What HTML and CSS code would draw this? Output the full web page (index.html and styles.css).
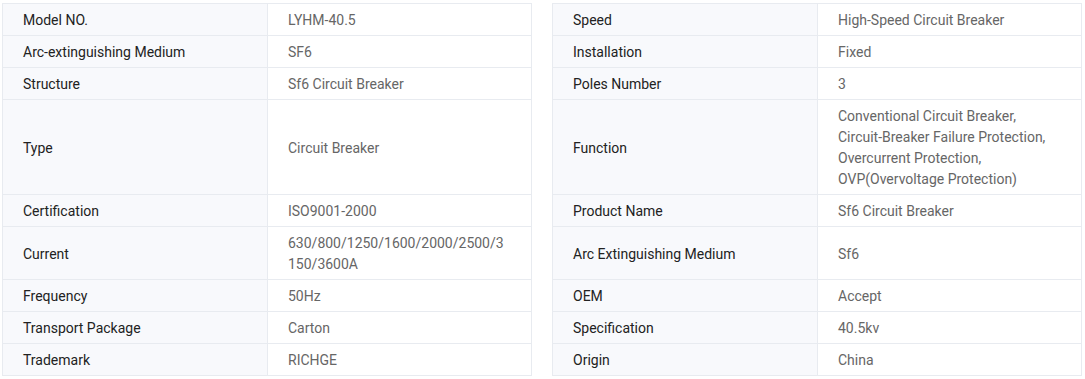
FILE: index.html
```html
<!DOCTYPE html>
<html lang="en">
<head>
<meta charset="utf-8">
<title>Specifications</title>
<link rel="stylesheet" href="styles.css">
</head>
<body>
<div class="spec">
  <div class="cell label first top">Model NO.</div>
  <div class="cell value top">LYHM-40.5</div>
  <div class="gap"></div>
  <div class="cell label first top">Speed</div>
  <div class="cell value top">High-Speed Circuit Breaker</div>

  <div class="cell label first">Arc-extinguishing Medium</div>
  <div class="cell value">SF6</div>
  <div class="gap"></div>
  <div class="cell label first">Installation</div>
  <div class="cell value">Fixed</div>

  <div class="cell label first">Structure</div>
  <div class="cell value">Sf6 Circuit Breaker</div>
  <div class="gap"></div>
  <div class="cell label first">Poles Number</div>
  <div class="cell value">3</div>

  <div class="cell label first">Type</div>
  <div class="cell value">Circuit Breaker</div>
  <div class="gap"></div>
  <div class="cell label first">Function</div>
  <div class="cell value">Conventional Circuit Breaker, Circuit-Breaker Failure Protection, Overcurrent Protection, OVP(Overvoltage Protection)</div>

  <div class="cell label first">Certification</div>
  <div class="cell value">ISO9001-2000</div>
  <div class="gap"></div>
  <div class="cell label first">Product Name</div>
  <div class="cell value">Sf6 Circuit Breaker</div>

  <div class="cell label first">Current</div>
  <div class="cell value">630/800/1250/1600/2000/2500/3150/3600A</div>
  <div class="gap"></div>
  <div class="cell label first">Arc Extinguishing Medium</div>
  <div class="cell value">Sf6</div>

  <div class="cell label first">Frequency</div>
  <div class="cell value">50Hz</div>
  <div class="gap"></div>
  <div class="cell label first">OEM</div>
  <div class="cell value">Accept</div>

  <div class="cell label first">Transport Package</div>
  <div class="cell value">Carton</div>
  <div class="gap"></div>
  <div class="cell label first">Specification</div>
  <div class="cell value">40.5kv</div>

  <div class="cell label first">Trademark</div>
  <div class="cell value">RICHGE</div>
  <div class="gap"></div>
  <div class="cell label first">Origin</div>
  <div class="cell value">China</div>
</div>
</body>
</html>
```

FILE: styles.css
```css
* {
  box-sizing: border-box;
}

html, body {
  margin: 0;
  padding: 0;
  background: #ffffff;
}

body {
  padding: 3px 0 0 2px;
  font-family: Roboto, "Liberation Sans", Arial, sans-serif;
  font-size: 14px;
  line-height: 21px;
}

.spec {
  display: grid;
  grid-template-columns: 266px 264px 20px 266px 264px;
}

.cell {
  display: flex;
  align-items: center;
  padding: 6px 20px 4px;
  border-right: 1px solid #e8ebf0;
  border-bottom: 1px solid #e8ebf0;
  overflow-wrap: anywhere;
  min-width: 0;
}

.cell.first {
  border-left: 1px solid #e8ebf0;
}

.cell.top {
  border-top: 1px solid #e8ebf0;
}

.label {
  background: #f8f9fc;
  color: #222222;
}

.value {
  background: #ffffff;
  color: #666666;
}
```
